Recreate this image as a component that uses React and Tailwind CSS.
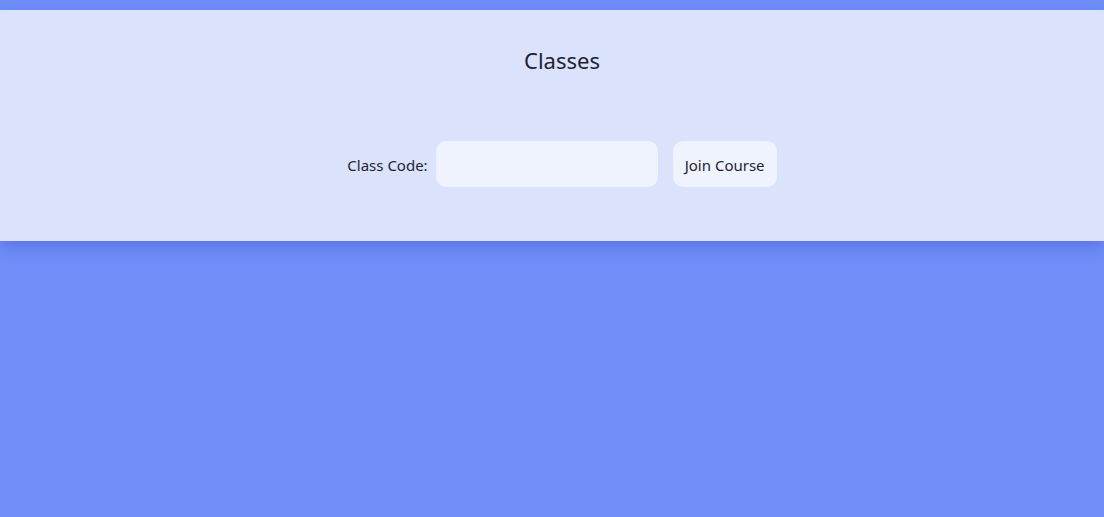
export default function App() {
  return (
    <div className="min-h-[517px] bg-[#6f8ef7] pt-[10px]" style={{ fontFamily: '"Noto Sans", "Open Sans", sans-serif' }}>
      <div className="bg-[#dbe2fc] h-[231px] shadow-[0_6px_14px_rgba(60,70,200,0.35)] flex flex-col items-center pl-[20px]">
        <h1 className="mt-[35px] text-[22px] leading-[30px] text-[#1d1f33]">Classes</h1>
        <div className="mt-[66px] flex items-center text-[15px] text-[#1d1f33]">
          <label className="mr-[8px] pt-[2px]">Class Code:</label>
          <input className="w-[222px] h-[46px] rounded-[10px] bg-[#eff3fd] outline-none px-3" />
          <button className="ml-[15px] w-[104px] h-[46px] rounded-[10px] bg-[#eff3fd] pt-[2px]">Join Course</button>
        </div>
      </div>
    </div>
  );
}
